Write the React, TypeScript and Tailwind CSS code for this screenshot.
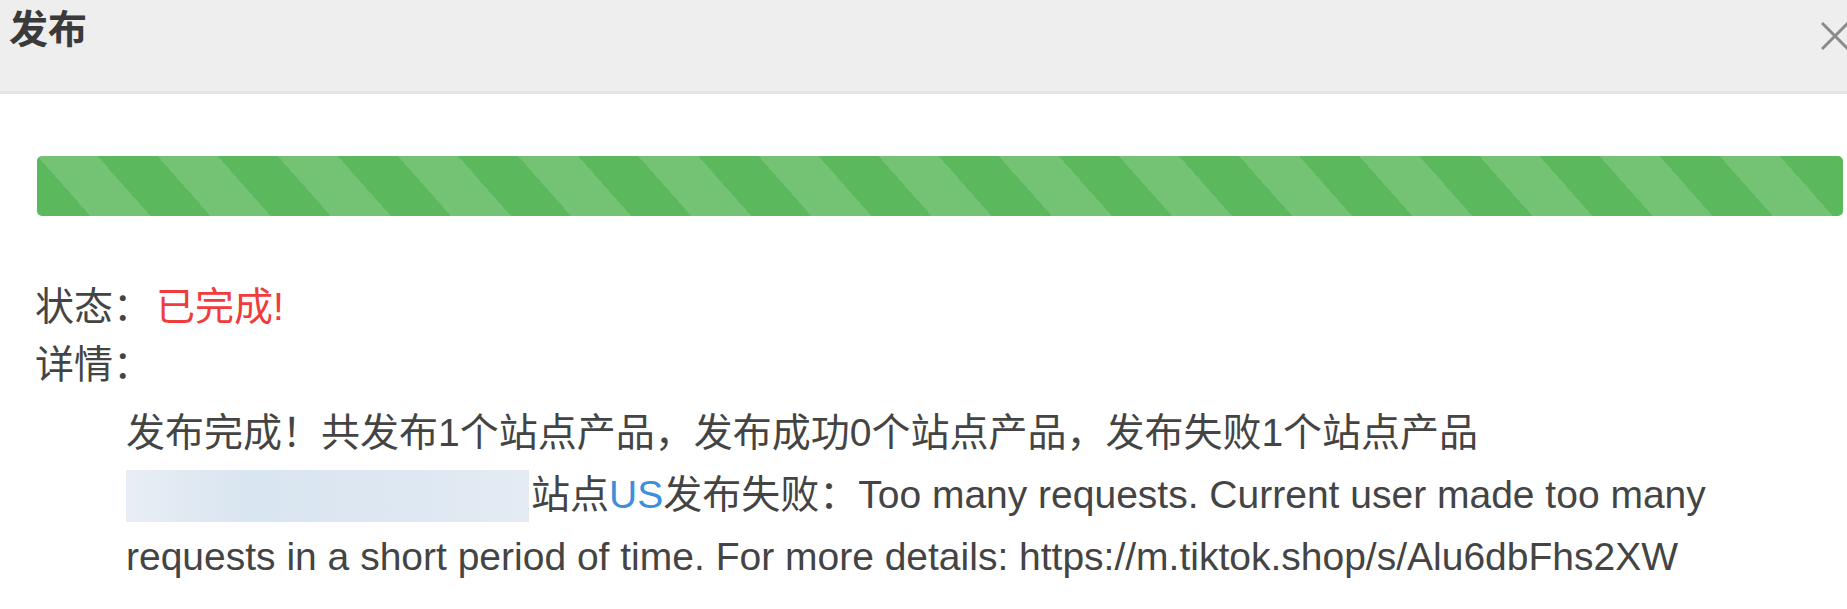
export default function App() {
  return (
    <div className="w-[1847px] h-[609px] overflow-hidden bg-white text-[#444] font-['Liberation_Sans','Noto_Sans_CJK_SC',sans-serif]">
      {/* dialog header */}
      <div className="h-[94px] bg-[#eeeeee] border-b-[3px] border-[#e4e4e4] flex items-start justify-between pt-[11px] pl-[9px]">
        <h2 className="text-[39px] leading-[38px] font-bold text-[#3a3a3a]">发布</h2>
        <svg className="mt-[11px] mr-[-2px] w-[28px] h-[28px] shrink-0" viewBox="0 0 28 28">
          <path d="M1 1 L27 27 M27 1 L1 27" stroke="#8a8a8a" strokeWidth="3" fill="none" />
        </svg>
      </div>

      <div className="pl-[37px] pr-[4px] pt-[62px]">
        <div className="h-[60px] rounded-[5px] bg-[#5cb85c] bg-[repeating-linear-gradient(48.5deg,#5cb85c_0_40px,#74c374_40px_85px,#5cb85c_85px_90px)]" />
      </div>

      <div className="pl-[35px] pt-[62px] text-[39px]">
        <div className="leading-[58px]">
          状态：<span className="ml-[4px] text-[#f03c3c]">已完成!</span>
        </div>
        <div className="leading-[58px]">详情：</div>
        <div className="mt-[8px] pl-[91px] pr-[40px] leading-[62px]">
          <div>发布完成！共发布1个站点产品，发布成功0个站点产品，发布失败1个站点产品</div>
          <div>
            <span className="inline-block align-middle w-[403px] h-[52px] -mt-[4px] mr-[2px] bg-[linear-gradient(90deg,#e8eef5,#d9e5f0_30%,#dce7f2_60%,#e4ebf3)]" />
            站点<span className="text-[#3d8fdb]">US</span>发布失败：Too many requests. Current user made too many requests in a short period of time. For more details: https://m.tiktok.shop/s/Alu6dbFhs2XW
          </div>
        </div>
      </div>
    </div>
  );
}
